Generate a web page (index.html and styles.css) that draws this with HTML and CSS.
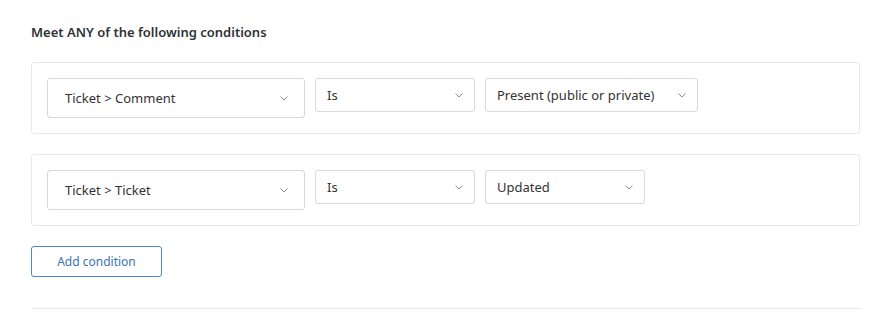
FILE: index.html
```html
<!DOCTYPE html>
<html lang="en">
<head>
<meta charset="utf-8">
<title>Conditions</title>
<link rel="stylesheet" href="styles.css">
</head>
<body>
<div class="page">
  <h2 class="title">Meet ANY of the following conditions</h2>
  <div class="card">
    <div class="select select-lg"><span>Ticket &gt; Comment</span><svg class="chev" viewBox="0 0 8 5" width="8" height="5"><path d="M0.5 0.5 L4 4 L7.5 0.5" fill="none" stroke="#8c8c8c" stroke-width="1"/></svg></div>
    <div class="select select-op"><span>Is</span><svg class="chev" viewBox="0 0 8 5" width="8" height="5"><path d="M0.5 0.5 L4 4 L7.5 0.5" fill="none" stroke="#8c8c8c" stroke-width="1"/></svg></div>
    <div class="select select-val1"><span>Present (public or private)</span><svg class="chev" viewBox="0 0 8 5" width="8" height="5"><path d="M0.5 0.5 L4 4 L7.5 0.5" fill="none" stroke="#8c8c8c" stroke-width="1"/></svg></div>
  </div>
  <div class="card">
    <div class="select select-lg"><span>Ticket &gt; Ticket</span><svg class="chev" viewBox="0 0 8 5" width="8" height="5"><path d="M0.5 0.5 L4 4 L7.5 0.5" fill="none" stroke="#8c8c8c" stroke-width="1"/></svg></div>
    <div class="select select-op"><span>Is</span><svg class="chev" viewBox="0 0 8 5" width="8" height="5"><path d="M0.5 0.5 L4 4 L7.5 0.5" fill="none" stroke="#8c8c8c" stroke-width="1"/></svg></div>
    <div class="select select-val2"><span>Updated</span><svg class="chev" viewBox="0 0 8 5" width="8" height="5"><path d="M0.5 0.5 L4 4 L7.5 0.5" fill="none" stroke="#8c8c8c" stroke-width="1"/></svg></div>
  </div>
  <button class="add-btn" type="button">Add condition</button>
  <hr class="divider">
</div>
</body>
</html>
```
FILE: styles.css
```css
html, body {
  margin: 0;
  padding: 0;
  background: #ffffff;
}
body {
  font-family: "Noto Sans", "Open Sans", sans-serif;
  color: #2f3337;
}
.page {
  width: 829px;
  padding: 23px 0 0 31px;
}
.title {
  margin: 0 0 21px 0;
  font-size: 13px;
  font-weight: 600;
  line-height: 18px;
  color: #2f3337;
}
.card {
  display: flex;
  align-items: flex-start;
  gap: 10px;
  border: 1px solid #e9e9e9;
  border-radius: 3px;
  padding: 15px;
  margin-bottom: 20px;
}
.select {
  box-sizing: border-box;
  display: flex;
  align-items: center;
  justify-content: space-between;
  border: 1px solid #d9d9d9;
  border-radius: 3px;
  height: 34px;
  padding: 0 11px 0 11px;
  font-size: 13px;
  color: #333;
  background: #fff;
}
.select-lg {
  width: 258px;
  height: 40px;
  padding: 0 16px 0 17px;
}
.select-op { width: 160px; }
.select-val1 { width: 213px; }
.select-val2 { width: 160px; }
.chev { display: block; }
.add-btn {
  display: block;
  box-sizing: border-box;
  width: 131px;
  height: 31px;
  margin-top: 0;
  border: 1px solid #4f86c6;
  border-radius: 3px;
  background: #fff;
  color: #3d72b5;
  font-family: "Noto Sans", "Open Sans", sans-serif;
  font-size: 12px;
  padding: 0;
}
.divider {
  margin: 31px 0 0 0;
  border: 0;
  border-top: 1px solid #e8e8e8;
  height: 0;
}
```
